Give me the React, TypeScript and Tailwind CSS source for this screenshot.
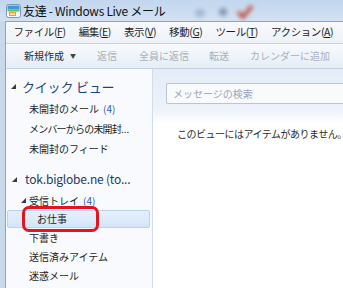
import React from 'react';

const Tri = ({ className = '' }: { className?: string }) => (
  <svg width="5" height="5" viewBox="0 0 5 5" className={className}>
    <polygon points="5,0 5,5 0,5" fill="#3a3a3a" />
  </svg>
);

const MailIcon = () => (
  <svg width="15" height="14" viewBox="0 0 15 14">
    <rect x="0.5" y="0.5" width="14" height="13" rx="2" fill="#f4f8fc" stroke="#7d97b8" />
    <rect x="1.5" y="1.5" width="12" height="4" fill="#3d9ad8" />
    <rect x="1.5" y="5.5" width="12" height="2" fill="#5fbf4f" />
    <rect x="3" y="8" width="7" height="4" fill="#f29a2e" />
    <rect x="4" y="9" width="5" height="2" fill="#fde3a8" />
  </svg>
);

const menu = [
  ['ファイル(', 'F', ')'],
  ['編集(', 'E', ')'],
  ['表示(', 'V', ')'],
  ['移動(', 'G', ')'],
  ['ツール(', 'T', ')'],
  ['アクション(', 'A', ')'],
];

const App = () => {
  return (
    <div className="w-[343px] h-[288px] overflow-hidden flex flex-col bg-[#c9d9ec] font-['Noto_Sans_CJK_JP',sans-serif] text-[#1e1e1e]">
      {/* title bar */}
      <div className="relative h-[21px] shrink-0 flex items-center pl-[6px] bg-gradient-to-b from-[#c2d6ee] to-[#d3e1f2]">
        <MailIcon />
        <span className="ml-[2px] text-[12px] leading-none tracking-[-0.3px] text-[#111] whitespace-nowrap">友達 - Windows Live メール</span>
        <svg className="absolute left-[190px] top-0" width="70" height="21" viewBox="0 0 70 21">
          <defs>
            <filter id="b" x="-50%" y="-50%" width="200%" height="200%">
              <feGaussianBlur stdDeviation="2.2" />
            </filter>
          </defs>
          <ellipse cx="10" cy="13" rx="5" ry="4" fill="#9fb6d2" filter="url(#b)" />
          <ellipse cx="33" cy="12" rx="4" ry="4" fill="#7f95b2" filter="url(#b)" />
          <path d="M48 12 L53 17 L62 6" stroke="#c0594a" strokeWidth="4" fill="none" filter="url(#b)" />
        </svg>
      </div>

      <div className="flex-1 flex flex-col ml-[5px] border-l border-t border-[#8ea3bf] min-h-0 min-w-0">
        {/* menu bar */}
        <div className="h-[21px] shrink-0 flex items-center pl-[1px] bg-gradient-to-b from-[#f7f9fc] to-[#eef3f9] whitespace-nowrap">
          {menu.map(([a, k, b]) => (
            <span key={a} className="shrink-0 px-[6.5px] text-[10.5px] leading-none tracking-[-0.4px] text-[#1e1e1e]">
              {a}
              <span className="underline">{k}</span>
              {b}
            </span>
          ))}
        </div>

        {/* toolbar */}
        <div className="h-[26px] shrink-0 flex items-center border-t border-b border-[#c3d1e3] bg-gradient-to-b from-[#f8fafd] to-[#e6edf6] text-[10px] leading-none whitespace-nowrap">
          <span className="shrink-0 ml-[18px] text-[#2b2b2b]">新規作成</span>
          <span className="shrink-0 ml-[6px] text-[6px] text-[#444]">▼</span>
          <span className="shrink-0 ml-[21px] text-[#a9b0ba]">返信</span>
          <span className="shrink-0 ml-[22px] text-[#a9b0ba]">全員に返信</span>
          <span className="shrink-0 ml-[20px] text-[#a9b0ba]">転送</span>
          <span className="shrink-0 ml-[21px] text-[#a9b0ba]">カレンダーに追加</span>
        </div>

        {/* main */}
        <div className="flex-1 flex min-h-0">
          {/* folder pane */}
          <div className="w-[147px] shrink-0 bg-[#f8fafd] border-r border-[#d2dcea] pt-[4px] text-[10px] leading-none">
            <div className="h-[26px] flex items-center pl-[5px]">
              <Tri />
              <span className="ml-[6px] text-[13px] text-[#1f3f8c] tracking-[-0.2px]">クイック ビュー</span>
            </div>
            <div className="h-[20px] flex items-center pl-[23px]">
              未開封のメール<span className="ml-[4px] text-[#2f5cb8]">(4)</span>
            </div>
            <div className="h-[20px] flex items-center pl-[23px] whitespace-nowrap tracking-[-0.8px]">
              メンバーからの未開封<span className="tracking-[0px]">...</span>
            </div>
            <div className="h-[20px] flex items-center pl-[23px]">未開封のフィード</div>

            <div className="mt-[8px] h-[24px] flex items-center pl-[6px]">
              <Tri />
              <span className="ml-[8px] text-[12px] text-[#1e3a66] tracking-[-0.2px] whitespace-nowrap">tok.biglobe.ne (to...</span>
            </div>
            <div className="h-[19px] flex items-center pl-[15px]">
              <Tri />
              <span className="ml-[3px]">受信トレイ</span>
              <span className="ml-[4px] text-[#2f5cb8]">(4)</span>
            </div>
            <div className="relative h-[18px] ml-[1px] mr-[2px] flex items-center pl-[29px] rounded-[2px] border border-[#b8d2f1] bg-gradient-to-b from-[#e6f0fc] to-[#d4e5fa]">
              お仕事
              <div className="absolute left-[14px] top-[-5px] w-[77px] h-[26px] border-[3px] border-[#e3141d] rounded-[7px]" />
            </div>
            <div className="h-[19px] flex items-center pl-[23px]">下書き</div>
            <div className="h-[19px] flex items-center pl-[23px]">送信済みアイテム</div>
            <div className="h-[19px] flex items-center pl-[23px]">迷惑メール</div>
          </div>

          {/* message pane */}
          <div className="flex-1 flex flex-col min-w-0 bg-white">
            <div className="h-[42px] shrink-0 pt-[14px] pl-[13px] bg-gradient-to-b from-[#e4ecf7] to-[#eef3fa]">
              <div className="h-[21px] flex items-center pl-[6px] border border-r-0 border-[#b7c5d9] rounded-l-[2px] bg-[#f9fafc] text-[10px] leading-none text-[#97a5bd]">
                メッセージの検索
              </div>
            </div>
            <div className="h-[12px] shrink-0 bg-gradient-to-b from-[#eef3fa] to-white" />
            <div className="pl-[24px] pt-[6px] text-[10px] leading-none whitespace-nowrap tracking-[-0.5px] text-[#2b2b2b]">
              このビューにはアイテムがありません。
            </div>
          </div>
        </div>
      </div>
    </div>
  );
};

export default App;
